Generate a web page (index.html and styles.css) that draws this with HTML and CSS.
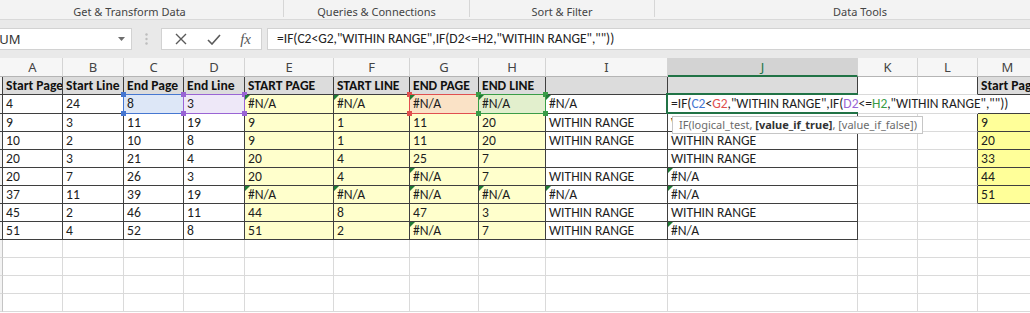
FILE: index.html
```html
<!DOCTYPE html>
<html lang="en">
<head>
  <meta charset="UTF-8" />
  <title>Within Range</title>
  <link rel="stylesheet" href="styles.css">
</head>
<body>

  <div class="ribbon">
    <div class="group g1">Get &amp; Transform Data</div>
    <div class="group g2">Queries &amp; Connections</div>
    <div class="group g3">Sort &amp; Filter</div>
    <div class="group g4">Data Tools</div>
  </div>

  <div class="formula-band">
    <div class="namebox">
      <span>SUM</span>
      <svg class="arrow" width="7" height="4" viewBox="0 0 7 4"><path d="M0 0h7L3.5 4z" fill="#6d6d6d"/></svg>
    </div>
    <div class="grip">
      <svg width="3" height="12" viewBox="0 0 3 12"><circle cx="1.5" cy="1.5" r="1.2" fill="#bdbdbd"/><circle cx="1.5" cy="6" r="1.2" fill="#bdbdbd"/><circle cx="1.5" cy="10.5" r="1.2" fill="#bdbdbd"/></svg>
    </div>
    <div class="fx-buttons">
      <svg width="12" height="12" viewBox="0 0 12 12"><path d="M1 1l10 10M11 1L1 11" stroke="#5a5a5a" stroke-width="1.4" fill="none"/></svg>
      <svg width="14" height="11" viewBox="0 0 14 11"><path d="M1 6l4 4 8-9" stroke="#5a5a5a" stroke-width="1.6" fill="none"/></svg>
      <span class="fx">fx</span>
    </div>
    <div class="formula-input">=IF(C2&lt;G2,"WITHIN RANGE",IF(D2&lt;=H2,"WITHIN RANGE",""))</div>
  </div>

  <div class="sheet" id="sheet"></div>

  <div class="tooltip">IF(logical_test, <b>[value_if_true]</b>, [value_if_false])</div>

  <script>
    const letters = ['A','B','C','D','E','F','G','H','I','J','K','L','M'];
    const formula = '=IF(<span class="fc">C2</span>&lt;<span class="fg">G2</span>,"WITHIN RANGE",IF(<span class="fd">D2</span>&lt;=<span class="fh">H2</span>,"WITHIN RANGE",""))';
    const W = 'WITHIN RANGE', NA = '#N/A';

    const data = [
      ['Start Page','Start Line','End Page','End Line','START PAGE','START LINE','END PAGE','END LINE','','','','','Start Page'],
      ['4','24','8','3',NA,NA,NA,NA,NA,'','','',''],
      ['9','3','11','19','9','1','11','20',W,W,'','','9'],
      ['10','2','10','8','9','1','11','20',W,W,'','','20'],
      ['20','3','21','4','20','4','25','7','',W,'','','33'],
      ['20','7','26','3','20','4',NA,'7',W,NA,'','','44'],
      ['37','11','39','19',NA,NA,NA,NA,NA,NA,'','','51'],
      ['45','2','46','11','44','8','47','3',W,W,'','',''],
      ['51','4','52','8','51','2',NA,'7',W,NA,'','',''],
      [], [], [], []
    ];

    // cells of row 2 that the formula points to
    const refs = { 2: 'rc', 3: 'rd', 6: 'rg', 7: 'rh' };
    const sheet = document.getElementById('sheet');

    function addCell(cls, html) {
      const d = document.createElement('div');
      d.className = 'c ' + cls;
      if (html) d.innerHTML = html;
      sheet.appendChild(d);
      return d;
    }

    addCell('ch corner');
    letters.forEach((l, i) => addCell(i == 9 ? 'ch on' : 'ch', l));

    data.forEach((row, r) => {
      addCell(r <= 8 ? 'rn t' : 'rn');
      for (let c = 0; c < 13; c++) {
        const text = row[c] || '';
        let cls = [];
        if (r <= 8 && c <= 9) cls.push('t');
        if (r == 0 && c <= 9) cls.push('hd');
        if (r >= 1 && r <= 8 && c >= 4 && c <= 7) cls.push('yl');
        if (c == 12) {
          if (r == 0) cls.push('t', 'hd');
          if (r >= 2 && r <= 6) cls.push('t', 'my');
          if (r == 1) cls.push('spill', 'mt');
        }
        if (c == 11 && (r == 0 || (r >= 2 && r <= 6))) cls.push('lr');
        if (r == 1 && (c == 10 || c == 11)) cls.push('spill');
        if (text == NA && c >= 4) cls.push('err');

        if (r == 1 && refs[c]) {
          cls.push('ref', refs[c]);
          const cell = addCell(cls.join(' '), text);
          const box = document.createElement('div');
          box.className = 'box';
          box.innerHTML = '<i class="h tl"></i><i class="h tr"></i><i class="h bl"></i><i class="h br"></i>';
          cell.appendChild(box);
        } else if (r == 1 && c == 9) {
          cls.push('sel');
          const cell = addCell(cls.join(' '), formula);
          const box = document.createElement('div');
          box.className = 'selbox';
          cell.appendChild(box);
        } else {
          addCell(cls.join(' '), text);
        }
      }
    });
  </script>
</body>
</html>
```

FILE: styles.css
```css
:root {
  --grid: #dadada;
  --line: #3f3f3f;
  --verde: #217346;
  --amarelo: #ffffcc;
}

* {
  box-sizing: border-box;
}

body {
  margin: 0;
  width: 1030px;
  height: 313px;
  overflow: hidden;
  position: relative;
  background: #ffffff;
  font-family: "Carlito", "Lato", sans-serif;
}

/* ribbon group labels */
.ribbon {
  display: flex;
  height: 20px;
  margin-left: -24px;
  background: #f3f3f3;
  border-bottom: 1px solid #d9d9d9;
}

.group {
  flex: none;
  height: 17px;
  padding-top: 4px;
  line-height: 15px;
  text-align: center;
  font-family: "Noto Sans", sans-serif;
  font-size: 11px;
  color: #444;
  border-right: 1px solid #d6d6d6;
}

.g1 { width: 308px; }
.g2 { width: 186px; }
.g3 { width: 185px; }
.g4 { width: 410px; border-right: none; }

/* formula bar */
.formula-band {
  display: flex;
  align-items: center;
  height: 38px;
  padding: 8px 0;
  background: #e9e9e9;
}

.namebox {
  flex: none;
  display: flex;
  align-items: center;
  justify-content: space-between;
  width: 142px;
  height: 22px;
  margin-left: -10px;
  padding: 0 6px 0 1px;
  background: #fff;
  border: 1px solid #d2d2d2;
  font-family: "Noto Sans", sans-serif;
  font-size: 13px;
  color: #333;
}

.grip {
  flex: none;
  width: 29px;
  display: flex;
  justify-content: center;
}

.fx-buttons {
  flex: none;
  display: flex;
  align-items: center;
  justify-content: space-between;
  width: 101px;
  height: 22px;
  padding: 0 10px 0 13px;
  background: #fff;
  border: 1px solid #d2d2d2;
}

.fx {
  font-family: "Liberation Serif", serif;
  font-style: italic;
  font-size: 15px;
  color: #555;
}

.formula-input {
  flex: 1;
  height: 22px;
  margin-left: 5px;
  padding-left: 9px;
  line-height: 20px;
  background: #fff;
  border: 1px solid #d2d2d2;
  border-right: none;
  font-size: 13.5px;
  color: #222;
  white-space: nowrap;
}

/* grid */
.sheet {
  display: grid;
  grid-template-columns: 3px 60px 61px 60px 61px 89px 76px 69px 67px 122px 190px 60px 60px 60px;
  grid-template-rows: 19px 18px 19px repeat(11, 18px);
}

.c {
  position: relative;
  border-right: 1px solid var(--grid);
  border-bottom: 1px solid var(--grid);
  padding: 0 3px;
  font-size: 13.6px;
  line-height: 17px;
  color: #1e1e1e;
  white-space: nowrap;
  overflow: hidden;
}

.ch {
  background: #f6f6f6;
  border-right-color: #d4d4d4;
  border-bottom-color: #b5b5b5;
  text-align: center;
  font-family: "Noto Sans", sans-serif;
  font-size: 13px;
  line-height: 19px;
  color: #444;
}

.ch.on {
  background: #d3d3d3;
  color: var(--verde);
  border-bottom: 2px solid var(--verde);
}

.rn {
  padding: 0;
  background: #f3f3f3;
  border-right-color: #c4c4c4;
}

.rn.t {
  border-right-color: var(--line);
}

.t {
  border-right-color: var(--line);
  border-bottom-color: var(--line);
}

.lr {
  border-right-color: var(--line);
}

.mt {
  border-bottom-color: var(--line);
}

.hd {
  background: #dcdcdc;
  font-weight: bold;
  color: #111;
}

.yl { background: var(--amarelo); }
.my { background: #ffff99; }

.spill {
  border-right: none;
}

.err::before {
  content: "";
  position: absolute;
  left: 0;
  top: 0;
  z-index: 2;
  border-top: 5px solid #1f7a36;
  border-right: 5px solid transparent;
}

/* coloured references of the formula being edited */
.ref {
  overflow: visible;
  z-index: 1;
}

.rc { background: #dde7f7; }
.rd { background: #eee8f8; }
.rg { background: #fae2c6; }
.rh { background: #e2efcd; }

.box {
  position: absolute;
  left: -1px;
  top: -1px;
  right: -1px;
  bottom: -1px;
  border: 1px solid currentColor;
}

.rc .box { color: #4677d1; }
.rd .box { color: #9964d4; }
.rg .box { color: #e04f4f; }
.rh .box { color: #3a9c47; }

.h {
  position: absolute;
  width: 5px;
  height: 5px;
  background: currentColor;
}

.tl { left: -3px; top: -3px; }
.tr { right: -3px; top: -3px; }
.bl { left: -3px; bottom: -3px; }
.br { right: -3px; bottom: -3px; }

/* cell being edited: text runs on over K, L and M */
.sel {
  overflow: visible;
  z-index: 2;
  font-size: 13.5px;
  border-right-color: transparent;
}

.selbox {
  position: absolute;
  left: -2px;
  top: -2px;
  right: -1px;
  bottom: -1px;
  z-index: -1;
  border: 2px solid var(--verde);
  border-right: none;
}

.fc { color: #4677d1; }
.fg { color: #e04f4f; }
.fd { color: #9964d4; }
.fh { color: #3a9c47; }

.tooltip {
  position: absolute;
  left: 672px;
  top: 116px;
  width: 251px;
  height: 18px;
  padding: 0 6px;
  background: #fff;
  border: 1px solid #c6c6c6;
  font-family: "Noto Sans", sans-serif;
  font-size: 11px;
  line-height: 16px;
  color: #6b6b6b;
  white-space: nowrap;
  z-index: 5;
}

.tooltip b {
  color: #333;
}
```
